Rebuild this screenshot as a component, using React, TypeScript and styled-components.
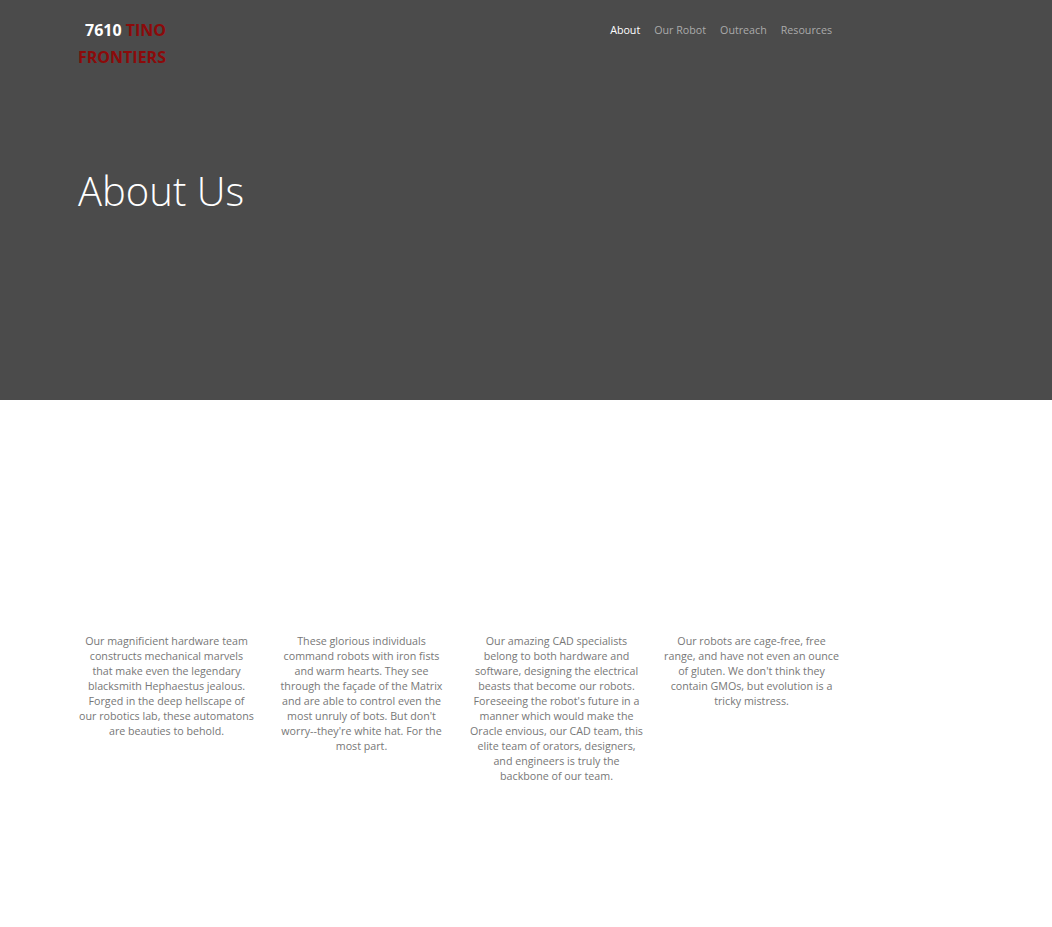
import React from "react";
import styled, { createGlobalStyle } from "styled-components";

const GlobalStyle = createGlobalStyle`
  html, body {
    margin: 0;
    padding: 0;
    background: #fff;
    font-family: "Open Sans", "Liberation Sans", sans-serif;
  }
`;

const teams = [
  "Our magnificient hardware team constructs mechanical marvels that make even the legendary blacksmith Hephaestus jealous. Forged in the deep hellscape of our robotics lab, these automatons are beauties to behold.",
  "These glorious individuals command robots with iron fists and warm hearts. They see through the façade of the Matrix and are able to control even the most unruly of bots. But don't worry--they're white hat. For the most part.",
  "Our amazing CAD specialists belong to both hardware and software, designing the electrical beasts that become our robots. Foreseeing the robot's future in a manner which would make the Oracle envious, our CAD team, this elite team of orators, designers, and engineers is truly the backbone of our team.",
  "Our robots are cage-free, free range, and have not even an ounce of gluten. We don't think they contain GMOs, but evolution is a tricky mistress.",
];

const links = ["About", "Our Robot", "Outreach", "Resources"];

const App = () => {
  return (
    <>
      <GlobalStyle />
      <Hero>
        <Navbar>
          <Brand>
            <Number>7610 </Number>
            <Name>TINO FRONTIERS</Name>
          </Brand>
          <NavList>
            {links.map((l, i) => (
              <NavLink key={l} $active={i === 0}>
                {l}
              </NavLink>
            ))}
          </NavList>
        </Navbar>
        <Title>About Us</Title>
      </Hero>
      <Teams>
        {teams.map((t, i) => (
          <Column key={i}>{t}</Column>
        ))}
      </Teams>
    </>
  );
};

export default App;

const Hero = styled.header`
  height: 400px;
  background: #4b4b4b;
  padding: 17px 220px 0 78px;
  box-sizing: border-box;
`;

const Navbar = styled.nav`
  display: flex;
  justify-content: space-between;
  align-items: flex-start;
`;

const Brand = styled.div`
  width: 100px;
  font-size: 16px;
  font-weight: 700;
  line-height: 27px;
  text-indent: 7px;
`;

const Number = styled.span`
  color: #fff;
`;

const Name = styled.span`
  color: #8b0a0a;
`;

const NavList = styled.ul`
  display: flex;
  gap: 14px;
  list-style: none;
  margin: 0;
  padding: 0;
`;

const NavLink = styled.li<{ $active?: boolean }>`
  font-size: 10.7px;
  line-height: 27px;
  color: ${(p) => (p.$active ? "#fff" : "#aaa")};
  cursor: pointer;
`;

const Title = styled.h1`
  margin: 98px 0 0;
  font-size: 40px;
  font-weight: 300;
  line-height: 1.1;
  color: #fff;
`;

const Teams = styled.section`
  display: grid;
  grid-template-columns: repeat(4, 195px);
  padding: 234px 0 140px 69px;
`;

const Column = styled.p`
  margin: 0;
  padding: 0 10px;
  text-align: center;
  font-size: 10.7px;
  line-height: 15px;
  color: #777;
`;
